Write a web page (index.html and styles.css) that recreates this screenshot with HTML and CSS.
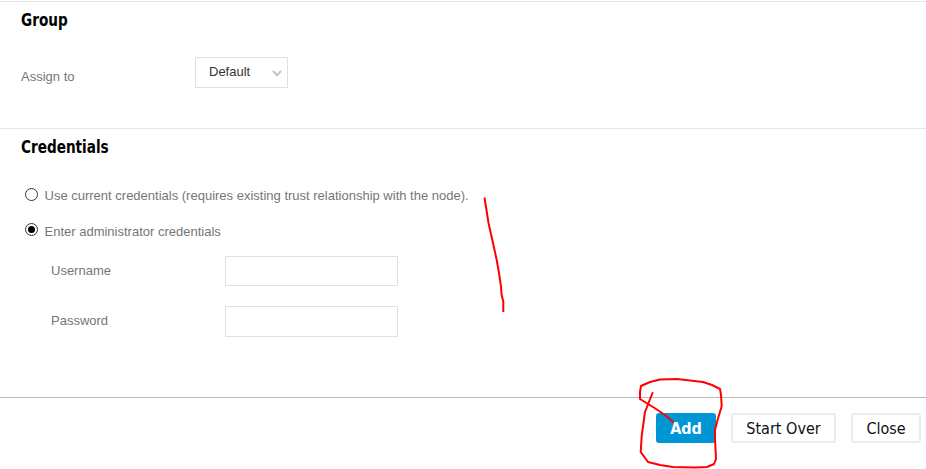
FILE: index.html
```html
<!DOCTYPE html>
<html lang="en">
<head>
<meta charset="utf-8">
<title>Add node</title>
<link rel="stylesheet" href="styles.css">
</head>
<body>
<main class="page">
  <section class="section group">
    <h2 class="heading">Group</h2>
    <div class="assign-row">
      <span class="label">Assign to</span>
      <div class="select">
        <span>Default</span>
        <svg class="chevron" width="10" height="7" viewBox="0 0 10 7"><path d="M1 1 5 5.300 9 1" fill="none" stroke="#c4c4c4" stroke-width="2"/></svg>
      </div>
    </div>
  </section>
  <section class="section credentials">
    <h2 class="heading">Credentials</h2>
    <div class="radio-row first">
      <span class="radio"></span>
      <span class="label">Use current credentials (requires existing trust relationship with the node).</span>
    </div>
    <div class="radio-row second">
      <span class="radio checked"></span>
      <span class="label">Enter administrator credentials</span>
    </div>
    <div class="field first-field">
      <span class="label field-label">Username</span>
      <div class="input"></div>
    </div>
    <div class="field second-field">
      <span class="label field-label">Password</span>
      <div class="input"></div>
    </div>
  </section>
  <footer class="footer">
    <button class="btn primary">Add</button>
    <button class="btn">Start Over</button>
    <button class="btn close">Close</button>
  </footer>
</main>
<svg class="ink" width="926" height="469" viewBox="0 0 926 469">
  <path d="M484.500 197.500 488.500 223 493 243 496.700 260 499 273 501 286.700 501.500 294 503.300 301.700 503.300 312" fill="none" stroke="#f00" stroke-width="2"/>
  <path d="M652.500 393 645 412 641.700 436 640.700 452 648 462 660 465 673 467 695 467.500 707 467 714 464 716 459 715 439 715 430 717 422 721.700 406 721 395 720 389 712 385 703 382 677 379 660 379.500 650 382 641 386 640 392 640 399 653 407 665 415 673 422" fill="none" stroke="#f00" stroke-width="2" stroke-linejoin="round" stroke-linecap="round"/>
</svg>
</body>
</html>
```
FILE: styles.css
```css
* { box-sizing: border-box; }
html, body { margin: 0; padding: 0; background: #fff; }
body { width: 926px; height: 469px; overflow: hidden; position: relative; font-family: "Liberation Sans", Arial, sans-serif; }
.page { display: flex; flex-direction: column; height: 469px; padding-top: 1px; }
.section { padding-left: 21px; }
.group { height: 127px; border-top: 1px solid #e6e6e6; }
.credentials { height: 269px; border-top: 1px solid #e6e6e6; }
.heading { margin: 0; padding-top: 8px; height: 28px; font-family: "DejaVu Sans", sans-serif; font-stretch: condensed; font-weight: 700; font-size: 17px; line-height: 20px; color: #000; transform: scaleX(.89); transform-origin: left top; }
.label { font-size: 13px; line-height: 16px; color: #767676; }
.assign-row { display: flex; align-items: flex-start; margin-top: 27px; }
.assign-row .label { width: 174px; padding-top: 12px; }
.select { width: 93px; height: 31px; border: 1px solid #e0e0e0; display: flex; align-items: center; justify-content: space-between; padding: 0 5px 2px 13px; font-size: 13px; color: #333; }
.chevron { margin-top: 3px; }
.radio-row { display: flex; align-items: center; height: 16px; padding-left: 4px; }
.radio-row .label { margin-left: 6.500px; }
.radio-row.first { margin-top: 31px; }
.radio-row.second { margin-top: 20px; }
.radio { width: 13px; height: 13px; border: 1px solid #333; border-radius: 50%; background: #fff; position: relative; top: -2px; }
.radio.checked { display: flex; align-items: center; justify-content: center; top: -3px; }
.radio.checked::before { content: ""; width: 7px; height: 7px; background: #000; border-radius: 50%; }
.field { display: flex; align-items: center; padding-left: 30px; }
.field-label { width: 174px; }
.first-field { margin-top: 16px; }
.second-field { margin-top: 20px; }
.input { width: 173px; height: 30px; border: 1px solid #e0e0e0; }
.second-field .input { height: 31px; }
.second-field .field-label { margin-bottom: 2px; }
.footer { display: flex; justify-content: flex-end; gap: 15px; padding: 15px 5px 0 0; border-top: 1px solid #b9b9b9; }
.btn { height: 30px; padding: 0; width: 105px; background: #fff; border: 2px solid #ececec; border-radius: 3px; font-family: "DejaVu Sans", sans-serif; font-stretch: condensed; font-size: 16px; color: #111; }
.btn.close { width: 70px; }
.btn.primary { width: 60px; background: #0096d6; border-color: #0096d6; color: #fff; font-weight: 700; }
.ink { position: absolute; left: 0; top: 0; pointer-events: none; }
```
